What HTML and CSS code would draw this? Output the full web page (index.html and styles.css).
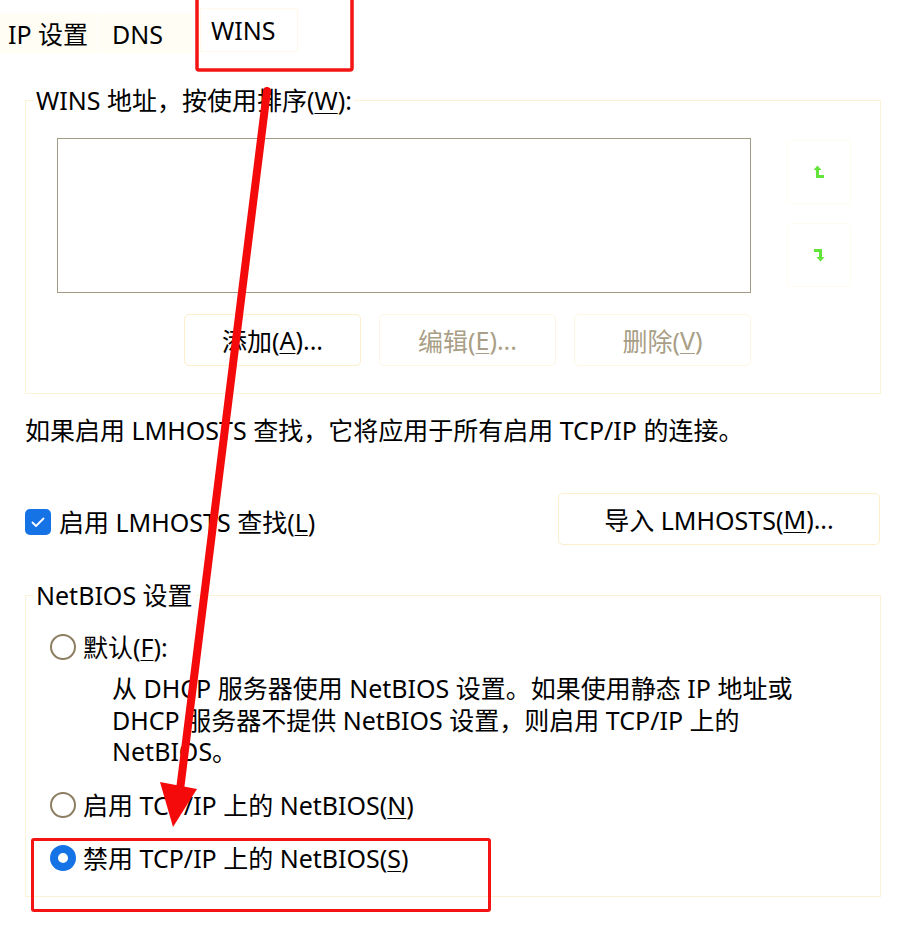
FILE: index.html
```html
<!DOCTYPE html>
<html lang="zh-CN">
<head>
<meta charset="utf-8">
<title>WINS</title>
<link rel="stylesheet" href="styles.css">
</head>
<body>
<div class="page">
  <div class="tabs">
    <div class="tab tab-ip">IP 设置</div>
    <div class="tab tab-dns">DNS</div>
    <div class="tab tab-wins">WINS</div>
  </div>

  <fieldset class="group wins">
    <legend>WINS 地址，按使用排序(<u>W</u>):</legend>
    <div class="wins-body">
      <div class="wins-main">
        <div class="listbox"></div>
        <div class="btn-row">
          <div class="btn">添加(<u>A</u>)...</div>
          <div class="btn disabled">编辑(<u>E</u>)...</div>
          <div class="btn disabled">删除(<u>V</u>)</div>
        </div>
      </div>
      <div class="arrows">
        <div class="arrow-btn">
          <svg width="12" height="14" viewBox="0 0 12 14"><path d="M0.5 5 L4.5 0.5 L8.5 5 Z M3 4 H6 V10 H11 V13 H3 Z" fill="#63e43a"/></svg>
        </div>
        <div class="arrow-btn">
          <svg width="12" height="14" viewBox="0 0 12 14"><g transform="rotate(180 6 7)"><path d="M0.5 5 L4.5 0.5 L8.5 5 Z M3 4 H6 V10 H11 V13 H3 Z" fill="#63e43a"/></g></svg>
        </div>
      </div>
    </div>
  </fieldset>

  <p class="note">如果启用 LMHOSTS 查找，它将应用于所有启用 TCP/IP 的连接。</p>

  <div class="lm-row">
    <div class="check">
      <span class="box"><svg width="26" height="26" viewBox="0 0 26 26"><path d="M7.5 13.5 L11 17 L18.5 9.5" fill="none" stroke="#fff" stroke-width="1.8" stroke-linecap="round" stroke-linejoin="round"/></svg></span>
      <span>启用 LMHOSTS 查找(<u>L</u>)</span>
    </div>
    <div class="btn import">导入 LMHOSTS(<u>M</u>)...</div>
  </div>

  <fieldset class="group netbios">
    <legend>NetBIOS 设置</legend>
    <div class="netbios-body">
      <div class="radio"><span class="dot"></span><span>默认(<u>F</u>):</span></div>
      <p class="desc">从 DHCP 服务器使用 NetBIOS 设置。如果使用静态 IP 地址或<br>DHCP 服务器不提供 NetBIOS 设置，则启用 TCP/IP 上的<br>NetBIOS。</p>
      <div class="radio r2"><span class="dot"></span><span>启用 TCP/IP 上的 NetBIOS(<u>N</u>)</span></div>
      <div class="radio r3 on"><span class="dot"></span><span>禁用 TCP/IP 上的 NetBIOS(<u>S</u>)</span></div>
    </div>
  </fieldset>
</div>

<svg class="annot" width="920" height="940" viewBox="0 0 920 940">
  <rect x="197" y="-10" width="155" height="80" rx="2" fill="none" stroke="#f51414" stroke-width="3.5"/>
  <rect x="32.5" y="839.5" width="457" height="71" rx="1.5" fill="none" stroke="#f51414" stroke-width="3"/>
  <line x1="267" y1="91" x2="180" y2="790" stroke="#f40a0a" stroke-width="8" stroke-linecap="round"/>
  <polygon points="160,782 197,789 173,827" fill="#f40a0a"/>
</svg>
</body>
</html>
```

FILE: styles.css
```css
* {
  box-sizing: border-box;
}

body {
  margin: 0;
  position: relative;
  width: 920px;
  height: 940px;
  overflow: hidden;
  background: #ffffff;
  color: #000000;
  font-family: "Noto Sans", "Noto Sans CJK SC", sans-serif;
  font-size: 25px;
}

.page {
  width: 920px;
}

u {
  text-decoration-thickness: 1px;
  text-underline-offset: 3px;
}

/* tabs */
.tabs {
  display: flex;
  align-items: flex-start;
  height: 53px;
}

.tab {
  height: 40px;
  margin-top: 13px;
  line-height: 42px;
  background: #fffdf4;
  white-space: nowrap;
}

.tab-ip {
  width: 98px;
  padding-left: 8px;
}

.tab-dns {
  width: 94px;
  margin-left: 1px;
  padding-left: 13px;
}

.tab-wins {
  width: 98px;
  height: 44px;
  margin-top: 8px;
  margin-left: 7px;
  padding-left: 10px;
  line-height: 42px;
  background: #ffffff;
  border: 1px solid #fef9ea;
}

/* group boxes */
.group {
  margin: 32px 39px 0 25px;
  padding: 0;
  min-width: 0;
  border: 1px solid #fcf3d6;
}

.group legend {
  margin-left: 8px;
  padding: 0 2px;
  line-height: 30px;
}

.wins-body {
  display: flex;
  gap: 36px;
  padding: 23px 29px 27px 31px;
}

.wins-main {
  width: 694px;
}

.listbox {
  height: 155px;
  border: 1px solid #a29c85;
  background: #ffffff;
}

.btn-row {
  display: flex;
  justify-content: flex-end;
  gap: 18px;
  margin-top: 21px;
}

.btn {
  width: 177px;
  height: 52px;
  display: flex;
  align-items: center;
  justify-content: center;
  border: 1px solid #fcefcb;
  border-radius: 5px;
  background: #ffffff;
  white-space: nowrap;
}

.btn.disabled {
  color: #a99e86;
  border-color: #fdf6e2;
}

.arrows {
  display: flex;
  flex-direction: column;
  gap: 19px;
  padding-top: 2px;
}

.arrow-btn {
  width: 64px;
  height: 64px;
  display: flex;
  align-items: center;
  justify-content: center;
  border: 1px solid #fffcef;
  border-radius: 4px;
}

/* LMHOSTS */
.note {
  margin: 20px 0 0 25px;
  line-height: 32px;
}

.lm-row {
  display: flex;
  align-items: center;
  justify-content: space-between;
  height: 52px;
  margin: 47px 40px 0 25px;
}

.check {
  display: flex;
  align-items: center;
  gap: 8px;
  line-height: 32px;
  margin-top: 6px;
}

.box {
  width: 26px;
  height: 26px;
  border-radius: 5px;
  background: #1673e6;
  display: block;
}

.box svg {
  display: block;
}

.btn.import {
  width: 322px;
}

/* NetBIOS */
.group.netbios {
  margin-top: 35px;
}

.netbios-body {
  padding: 21px 0 22px 24px;
}

.radio {
  display: flex;
  align-items: center;
  gap: 7px;
  height: 32px;
  line-height: 32px;
}

.dot {
  width: 26px;
  height: 26px;
  border-radius: 50%;
  border: 2px solid #8d7e62;
  background: #ffffff;
  flex: none;
}

.radio.on .dot {
  border: 8px solid #1673e6;
}

.desc {
  margin: 10px 0 0 62px;
  line-height: 31.5px;
}

.radio.r2,
.radio.r3 {
  margin-top: 21px;
}

/* annotation overlay */
.annot {
  position: absolute;
  left: 0;
  top: 0;
  pointer-events: none;
}
```
